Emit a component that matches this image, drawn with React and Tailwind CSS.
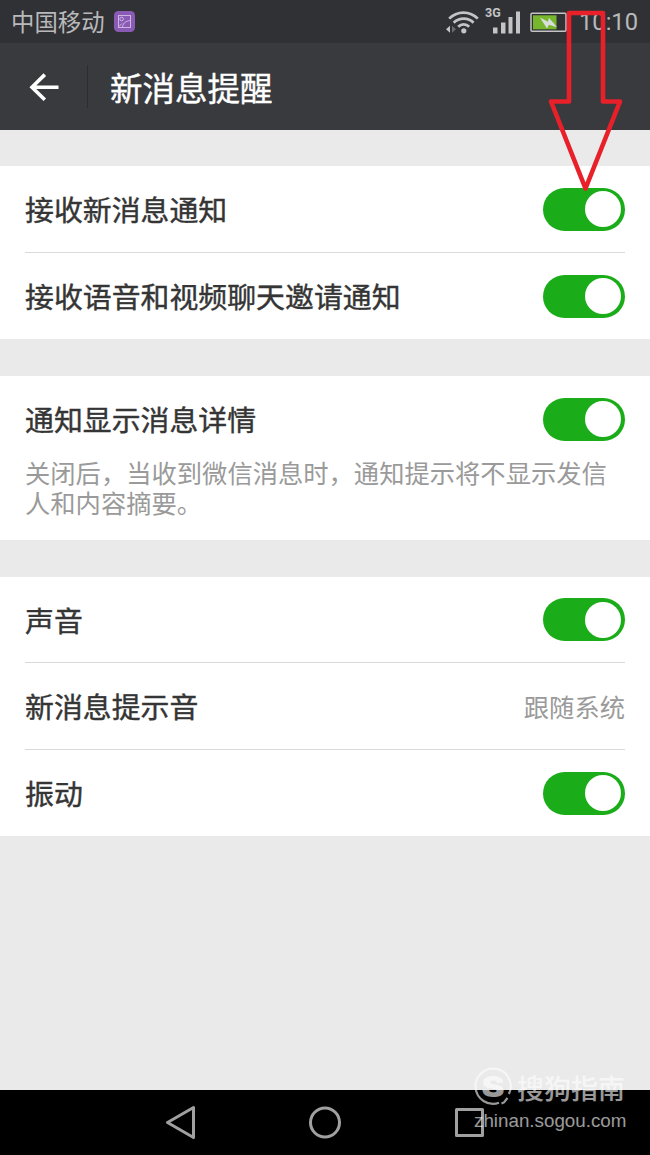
import { useState } from 'react';

const Toggle = ({ checked, onChange }) => (
  <button
    type="button"
    role="switch"
    aria-checked={checked}
    onClick={onChange}
    className={`h-[43px] w-[82px] mt-px shrink-0 rounded-full flex items-center px-[4px] ${
      checked ? 'bg-[#1aad19] justify-end' : 'bg-[#cccccc] justify-start'
    }`}
  >
    <span className="size-[36px] rounded-full bg-white" />
  </button>
);

const Row = ({ label, children }) => (
  <div className="h-[86.5px] flex items-center justify-between">
    <span className="text-[28.9px] leading-none text-[#353535] [-webkit-text-stroke:0.4px_#353535]">{label}</span>
    {children}
  </div>
);

const StatusBar = () => (
  <div className="h-[43px] bg-[#303135] flex items-center justify-between pl-[11px] pr-[12px] text-[#b9b9bb]">
    <div className="flex items-center gap-[9px]">
      <span className="text-[23.4px] leading-none">中国移动</span>
      <svg className="size-[21px]" viewBox="0 0 21 21" fill="none">
        <rect width="21" height="21" rx="4.5" fill="#8a5bb5" />
        <g stroke="#cdb4e2" strokeWidth="1">
          <rect x="4.5" y="4.5" width="12" height="12" />
          <circle cx="7.6" cy="8" r="1.8" />
          <path d="M5 15.5 L8 12.5 M8.5 16 C9.5 11 12 10.5 16 9.5" />
        </g>
      </svg>
    </div>
    <div className="flex items-center">
      {/* wifi */}
      <svg className="w-[34px] h-[25px] mt-[2px]" viewBox="0 0 34 25" fill="none">
        <g stroke="#c4c4c6" strokeWidth="2.8">
          <path d="M3.2 8.6 C11 0.5 24 0.5 31.8 8.6" />
          <path d="M7.7 12.8 C13 7.3 22.5 7.3 27.5 12.8" />
          <path d="M12.2 16.8 C15.4 13.6 20 13.6 23.2 16.8" />
        </g>
        <circle cx="17.8" cy="20.8" r="2.6" fill="#c4c4c6" />
        <path d="M0 19.2 L4 15.7 V22.7 Z" fill="#c4c4c6" />
        <path d="M10 19.2 L6 15.7 V22.7 Z" fill="#6c6c70" />
      </svg>
      {/* mobile signal */}
      <svg className="w-[38px] h-[38px] ml-[3px] overflow-visible" viewBox="-2 -4 38 38">
        <text x="0" y="10" fontSize="12.5" fontWeight="700" fill="#c4c4c6" className="font-['Roboto',sans-serif]">3G</text>
        <g fill="#c4c4c6">
          <rect x="8" y="20.5" width="4.5" height="6" />
          <rect x="16" y="15.5" width="4.5" height="11" />
          <rect x="23.5" y="10" width="4" height="16.5" />
          <rect x="31" y="4.5" width="4" height="22" />
        </g>
      </svg>
      {/* battery */}
      <svg className="w-[41px] h-[21px] ml-[9px] mt-px" viewBox="0 0 41 21">
        <rect x="1" y="1.3" width="35" height="18" rx="1" fill="none" stroke="#c4c4c6" strokeWidth="1.5" />
        <rect x="3" y="3.3" width="23.5" height="14" fill="#76b72d" />
        <rect x="37" y="6" width="3.5" height="9" rx="1" fill="#c4c4c6" />
        <path d="M10 5.5 L18 9.8 L18.8 5.8 L23.5 11 L27 15.3 L19 12.8 L17 16.5 Z" fill="#d9dedb" />
      </svg>
      <span className="ml-[8px] mt-[3px] text-[23.7px] leading-none font-['Roboto',sans-serif]">10:10</span>
    </div>
  </div>
);

const Header = () => (
  <div className="h-[87px] bg-[#393a3e] flex items-center">
    <svg className="w-[30px] h-[30px] ml-[29px] mt-[2px]" viewBox="0 0 30 30" fill="none" stroke="#fff" strokeWidth="3.6">
      <path d="M15.8 1.6 L3 14.2 L15.8 26.8 M3 14.2 H29.5" />
    </svg>
    <div className="w-px h-[43px] ml-[28px] bg-[#2c2d31]" />
    <h1 className="ml-[22px] mt-px text-[32.5px] leading-none text-white font-normal [-webkit-text-stroke:0.4px_#fff]">新消息提醒</h1>
  </div>
);

const NavBar = () => (
  <div className="h-[65px] bg-black">
    <svg className="w-[650px] h-[65px]" viewBox="0 0 650 65" fill="none" stroke="#a0a0a0" strokeWidth="3" strokeLinejoin="round">
      <path d="M167.5 32.5 L193.5 17.5 V47.5 Z" />
      <circle cx="325" cy="32.5" r="14.5" />
      <rect x="456.5" y="19.5" width="26" height="26" />
    </svg>
  </div>
);

const Watermark = () => (
  <div className="absolute left-[473px] top-[1067px] w-[170px] text-white opacity-60">
    <div className="flex items-center">
      <svg className="size-[40px]" viewBox="0 0 40 40" fill="none">
        <path d="M35.9 27 A17.6 17.6 0 1 0 26 35.8 M28.5 36.5 L31 35.4 L34.5 31" stroke="#fff" strokeWidth="2.2" />
        <text
          x="8.5"
          y="29.5"
          fontSize="28"
          fontWeight="900"
          fill="#fff"
          textLength="23"
          lengthAdjust="spacingAndGlyphs"
          className="font-['Inter',sans-serif]"
        >
          S
        </text>
      </svg>
      <span className="ml-[4px] text-[27px] leading-none font-medium">搜狗指南</span>
    </div>
    <p className="mt-[5px] ml-px text-[18.8px] leading-none font-['Liberation_Sans',sans-serif]">zhinan.sogou.com</p>
  </div>
);

export default function App() {
  const [settings, setSettings] = useState({
    message: true,
    call: true,
    detail: true,
    sound: true,
    vibrate: true,
  });

  const toggle = (key) => setSettings({ ...settings, [key]: !settings[key] });

  return (
    <div className="relative w-[650px] h-[1155px] overflow-hidden flex flex-col bg-[#eaeaea] font-['Noto_Sans_CJK_SC',sans-serif]">
      <StatusBar />
      <Header />

      <div className="flex-1 pt-[36px]">
        <section className="bg-white px-[25px] divide-y divide-[#d9d9d9]">
          <Row label="接收新消息通知">
            <Toggle checked={settings.message} onChange={() => toggle('message')} />
          </Row>
          <Row label="接收语音和视频聊天邀请通知">
            <Toggle checked={settings.call} onChange={() => toggle('call')} />
          </Row>
        </section>

        <section className="mt-[36.5px] h-[164.5px] bg-white px-[25px]">
          <Row label="通知显示消息详情">
            <Toggle checked={settings.detail} onChange={() => toggle('detail')} />
          </Row>
          <p className="-mt-[5px] w-[590px] text-[25.3px] leading-[30px] text-[#9a9a9a]">
            关闭后，当收到微信消息时，通知提示将不显示发信人和内容摘要。
          </p>
        </section>

        <section className="mt-[36.5px] bg-white px-[25px] divide-y divide-[#d9d9d9]">
          <Row label="声音">
            <Toggle checked={settings.sound} onChange={() => toggle('sound')} />
          </Row>
          <Row label="新消息提示音">
            <span className="mt-[2px] text-[25.3px] leading-none text-[#9a9a9a]">跟随系统</span>
          </Row>
          <Row label="振动">
            <Toggle checked={settings.vibrate} onChange={() => toggle('vibrate')} />
          </Row>
        </section>
      </div>

      <NavBar />
      <Watermark />

      {/* red pointer to the first switch */}
      <svg className="absolute left-[545px] top-[8px] w-[80px] h-[185px] pointer-events-none" viewBox="0 0 80 185" fill="none">
        <path d="M24 5 H58 V93.5 H75 L40.5 180.5 L6 93.5 H24 Z" stroke="#e8202a" strokeWidth="4.6" strokeLinejoin="round" />
      </svg>
    </div>
  );
}
